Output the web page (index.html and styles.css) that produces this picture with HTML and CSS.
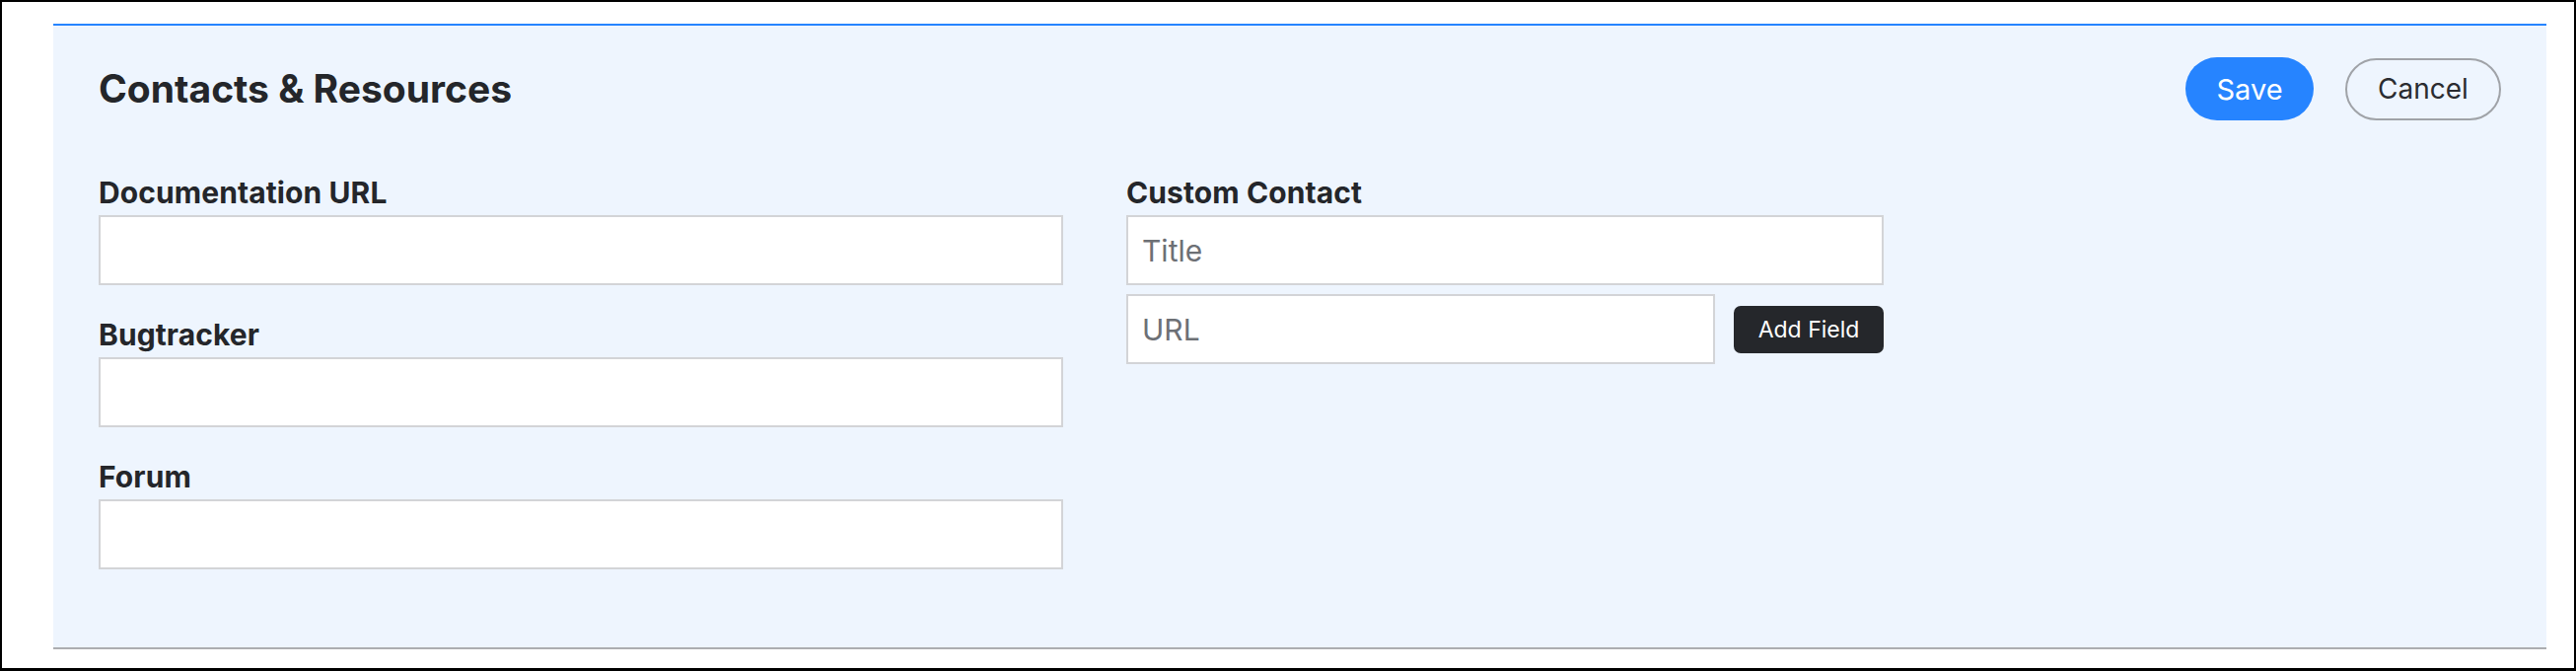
FILE: index.html
```html
<!DOCTYPE html>
<html lang="en">
<head>
<meta charset="utf-8">
<title>Contacts &amp; Resources</title>
<link rel="stylesheet" href="styles.css">
</head>
<body>
<div class="frame">
  <section class="panel">
    <header class="panel-head">
      <h2 class="panel-title">Contacts &amp; Resources</h2>
      <div class="actions">
        <button type="button" class="btn btn-save">Save</button>
        <button type="button" class="btn btn-cancel">Cancel</button>
      </div>
    </header>
    <div class="panel-body">
      <div class="col col-left">
        <div class="field">
          <label class="field-label">Documentation URL</label>
          <input class="text-input" type="text">
        </div>
        <div class="field">
          <label class="field-label">Bugtracker</label>
          <input class="text-input" type="text">
        </div>
        <div class="field">
          <label class="field-label">Forum</label>
          <input class="text-input" type="text">
        </div>
      </div>
      <div class="col col-right">
        <label class="field-label">Custom Contact</label>
        <input class="text-input" type="text" placeholder="Title">
        <div class="url-row">
          <input class="text-input url-input" type="text" placeholder="URL">
          <button type="button" class="btn-add">Add Field</button>
        </div>
      </div>
    </div>
  </section>
</div>
</body>
</html>
```

FILE: styles.css
```css
html, body {
  margin: 0;
  padding: 0;
  background: #ffffff;
}

body {
  font-family: Inter, "Noto Sans", "Liberation Sans", sans-serif;
  color: #24262a;
}

.frame {
  height: 680px;
  box-sizing: border-box;
  border: solid #000000;
  border-width: 2px 2px 3px 2px;
  padding: 22px 28px 19px 52px;
}

.panel {
  background: #eef5fe;
  border-top: 2px solid #2684ff;
  border-bottom: 2px solid #acadb0;
  padding: 32px 46px 47px 46px;
}

.panel-head {
  display: flex;
  align-items: center;
  justify-content: space-between;
  height: 64px;
}

.panel-title {
  margin: 0;
  font-size: 39px;
  line-height: 48px;
  font-weight: 700;
  color: #24262a;
  letter-spacing: 0;
}

.actions {
  display: flex;
  align-items: center;
  gap: 32px;
}

.btn {
  font-family: Inter, "Noto Sans", sans-serif;
  font-size: 28px;
  font-weight: 400;
  height: 64px;
  border-radius: 32px;
  padding: 0;
  cursor: pointer;
  box-sizing: border-box;
}

.btn-save {
  width: 130px;
  background: #2684ff;
  border: none;
  color: #ffffff;
  font-size: 29px;
}

.btn-cancel {
  width: 158px;
  height: 63px;
  background: transparent;
  border: 2px solid #a0a3a8;
  color: #2a2c30;
}

.panel-body {
  display: grid;
  grid-template-columns: 978px 768px;
  column-gap: 64px;
  align-items: start;
  margin-top: 55px;
}

.field {
  margin-bottom: 32px;
}

.field-label {
  display: block;
  font-size: 30px;
  line-height: 36px;
  font-weight: 700;
  color: #24262a;
  margin-bottom: 5px;
  letter-spacing: 0.1px;
}

.text-input {
  display: block;
  width: 100%;
  height: 71px;
  box-sizing: border-box;
  border: 2px solid #d3d4d7;
  border-radius: 0;
  background: #ffffff;
  padding: 0 14px;
  font-family: Inter, "Noto Sans", sans-serif;
  font-size: 30px;
  color: #24262a;
  outline: none;
}

.text-input::placeholder {
  color: #6d7075;
}

.url-row {
  display: flex;
  align-items: center;
  gap: 19px;
  margin-top: 9px;
}

.url-input {
  width: 597px;
  flex: 0 0 597px;
}

.btn-add {
  width: 152px;
  height: 48px;
  background: #25272b;
  color: #ffffff;
  border: none;
  border-radius: 7px;
  font-family: Inter, "Noto Sans", sans-serif;
  font-size: 23px;
  padding: 0;
  cursor: pointer;
}
```
